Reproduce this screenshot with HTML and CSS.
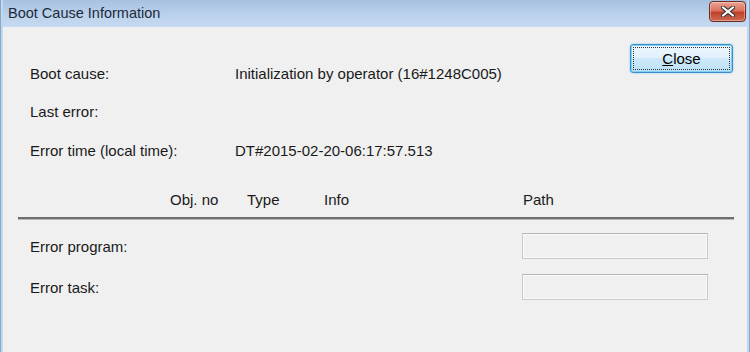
FILE: index.html
```html
<!DOCTYPE html>
<html lang="en">
<head>
  <meta charset="UTF-8" />
  <title>Boot Cause Information</title>
  <link rel="stylesheet" href="styles.css">
</head>
<body>
  <div class="window">
    <div class="titlebar">
      <span class="title">Boot Cause Information</span>
      <button class="close-x" aria-label="Close">
        <svg width="14" height="11" viewBox="0 0 14 11">
          <path d="M2 1.5 L12 9.5 M12 1.5 L2 9.5" stroke="#3a3a3a" stroke-width="4.2" stroke-linecap="round"/>
          <path d="M2 1.5 L12 9.5 M12 1.5 L2 9.5" stroke="#ffffff" stroke-width="2.2" stroke-linecap="round"/>
        </svg>
      </button>
    </div>

    <div class="content">
      <div class="top">
        <div class="info">
          <div class="label">Boot cause:</div>
          <div class="value">Initialization by operator (16#1248C005)</div>
          <div class="label">Last error:</div>
          <div class="value"></div>
          <div class="label">Error time (local time):</div>
          <div class="value">DT#2015-02-20-06:17:57.513</div>
        </div>
        <button class="btn"><span><u>C</u>lose</span></button>
      </div>

      <div class="table-head">
        <span class="col-obj">Obj. no</span>
        <span class="col-type">Type</span>
        <span class="col-info">Info</span>
        <span class="col-path">Path</span>
      </div>
      <div class="divider"></div>

      <div class="errors">
        <div class="label">Error program:</div>
        <div class="field"></div>
        <div class="label">Error task:</div>
        <div class="field"></div>
      </div>
    </div>
  </div>
</body>
</html>
```

FILE: styles.css
```css
body {
  margin: 0;
  padding: 0;
  font-family: 'Liberation Sans', Arial, sans-serif;
  font-size: 15px;
  color: #1a1a1a;
  background: #f0f0f0;
}

.window {
  width: 750px;
  height: 352px;
  box-sizing: border-box;
  display: flex;
  flex-direction: column;
  background: #f0f0f0;
  border-left: 1px solid #8aa6c8;
  border-right: 1px solid #8aa6c8;
  overflow: hidden;
}

.titlebar {
  height: 27px;
  flex: none;
  display: flex;
  align-items: flex-start;
  justify-content: space-between;
  background: linear-gradient(#a7c1e0, #bcd3ec 60%, #c6daf1);
  box-shadow: inset 2px 0 0 #c3d7ee, inset -2px 0 0 #c3d7ee;
}

.title {
  margin: 5px 0 0 7px;
  font-size: 14.5px;
  color: #1e2a3a;
}

.close-x {
  width: 37px;
  height: 21px;
  margin: 1px 3px 0 0;
  padding: 0;
  border: 1px solid #6e2b22;
  border-radius: 4px;
  background: linear-gradient(#eba392, #d8735f 45%, #c2412b 55%, #cf6a4f);
  box-shadow: inset 0 0 0 1px rgba(255,255,255,0.35);
  display: flex;
  align-items: center;
  justify-content: center;
}

.content {
  flex: 1;
  border-left: 2px solid #c3d7ee;
  border-right: 2px solid #c3d7ee;
  display: flex;
  flex-direction: column;
}

.top {
  display: flex;
  justify-content: space-between;
  align-items: flex-start;
  padding: 17px 14px 0 27px;
}

.info {
  display: grid;
  grid-template-columns: 205px auto;
  grid-auto-rows: 20px;
  row-gap: 18.5px;
  align-items: center;
  margin-top: 19px;
}

.label, .value {
  white-space: nowrap;
}

.btn {
  width: 103px;
  height: 29px;
  padding: 2px;
  border: 1px solid #3c8ec9;
  border-radius: 3px;
  background: linear-gradient(#eef7fd, #e0f1fc 50%, #cde9fa 50%, #bde0f5);
  box-shadow: 0 0 0 1px #7fd0f2 inset, 0 0 2px #6cc4ee;
  font-family: inherit;
  font-size: 15px;
  color: #000;
}

.btn span {
  display: block;
  height: 100%;
  box-sizing: border-box;
  line-height: 21px;
  border: 1px dotted #333;
}

.table-head {
  position: relative;
  height: 20px;
  margin-top: 28px;
}

.table-head span {
  position: absolute;
  top: 3px;
}

.col-obj { left: 167px; }
.col-type { left: 244px; }
.col-info { left: 321px; }
.col-path { left: 520px; }

.divider {
  height: 2px;
  margin: 9px 13px 0 15px;
  background: #6f6f6f;
  border-bottom: 1px solid #b8b8b8;
}

.errors {
  display: grid;
  grid-template-columns: 492px 186px;
  grid-auto-rows: 26px;
  row-gap: 15px;
  align-items: center;
  padding: 13px 0 0 27px;
}

.field {
  height: 26px;
  box-sizing: border-box;
  border: 1px solid #c9c9c9;
  border-top-color: #b4b4b4;
  box-shadow: inset 0 0 0 1px #fafafa;
  background: #f0f0f0;
}
```
